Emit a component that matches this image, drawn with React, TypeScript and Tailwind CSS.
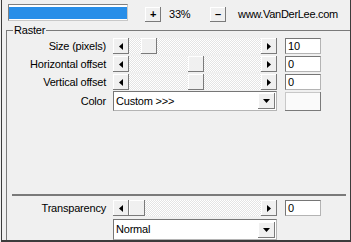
import React from 'react';

const raised =
  'bg-[#f0f0f0] shadow-[inset_-1px_-1px_0_#7a7a7a,inset_1px_1px_0_#ffffff]';
const sunken = 'bg-white border border-[#b4b4b4] border-t-[#767676] border-l-[#767676]';

const ArrowLeft = () => (
  <svg width="4" height="7" viewBox="0 0 4 7">
    <polygon points="4,0 4,7 0,3.5" fill="#000" />
  </svg>
);

const ArrowRight = () => (
  <svg width="4" height="7" viewBox="0 0 4 7">
    <polygon points="0,0 0,7 4,3.5" fill="#000" />
  </svg>
);

const ArrowDown = () => (
  <svg width="7" height="4" viewBox="0 0 7 4">
    <polygon points="0,0 7,0 3.5,4" fill="#000" />
  </svg>
);

const Scroll: React.FC<{ thumb: string }> = ({ thumb }) => (
  <div className="flex w-[164px] h-[16px]">
    <div className={`${raised} w-[16px] h-full flex items-center justify-center`}>
      <ArrowLeft />
    </div>
    <div className="flex-1 h-full bg-[repeating-conic-gradient(#ffffff_0_25%,#e4e4e4_0_50%)] bg-[length:2px_2px]">
      <div className={`${raised} ${thumb} w-[16px] h-full`} />
    </div>
    <div className={`${raised} w-[16px] h-full flex items-center justify-center`}>
      <ArrowRight />
    </div>
  </div>
);

const Edit: React.FC<{ value: string }> = ({ value }) => (
  <div className={`${sunken} w-[36px] h-[16px] ml-[8px] pl-[2px] leading-[14px]`}>{value}</div>
);

const Combo: React.FC<{ value: string }> = ({ value }) => (
  <div className={`${sunken} w-[164px] h-full flex items-center pl-[2px] pr-px`}>
    <span className="flex-1">{value}</span>
    <div className={`${raised} w-[17px] h-[16px] flex items-center justify-center`}>
      <ArrowDown />
    </div>
  </div>
);

const Row: React.FC<{ label: string; children: React.ReactNode; h?: string }> = ({
  label,
  children,
  h = 'h-[16px]',
}) => (
  <div className={`flex items-center ${h}`}>
    <div className="w-[99px] text-right">{label}</div>
    <div className="ml-[7px] flex items-center h-full">{children}</div>
  </div>
);

export default function App() {
  return (
    <div className="w-[351px] h-[242px] bg-[#f0f0f0] overflow-hidden text-black text-[11px] tracking-[-0.2px] font-['Liberation_Sans',Arial,sans-serif]">
      <div className="h-full ml-px border-l border-r border-b-2 border-[#3c3c3c] flex flex-col">
        {/* top bar */}
        <div className="flex items-start h-[23px] pt-[4px] pl-[6px]">
          <div className="w-[120px] h-[17px] bg-white border border-[#c8c8c8] border-t-[#808080] border-l-[#808080] pt-[2px] pb-px">
            <div className="h-full bg-[#288ee8]" />
          </div>
          <div className={`${raised} ml-[17px] mt-[3px] w-[16px] h-[15px] flex items-center justify-center font-bold leading-none`}>
            +
          </div>
          <div className="ml-[8px] mt-[3px] w-[41px] leading-[15px]">33%</div>
          <div className={`${raised} mt-[3px] w-[16px] h-[15px] flex items-center justify-center font-bold leading-none`}>
            –
          </div>
          <div className="ml-[12px] mt-[3px] leading-[15px] tracking-[-0.3px]">www.VanDerLee.com</div>
        </div>

        {/* group */}
        <div className="relative flex-1 mt-[7px] ml-[4px] border-t border-l border-[#7a7a7a] flex flex-col">
          <div className="absolute -top-[7px] left-[6px] px-px bg-[#f0f0f0] leading-[13px]">Raster</div>
          <div className="pt-[7px] flex flex-col gap-[2px]">
            <Row label="Size (pixels)">
              <Scroll thumb="ml-[12px]" />
              <Edit value="10" />
            </Row>
            <Row label="Horizontal offset">
              <Scroll thumb="ml-[59px]" />
              <Edit value="0" />
            </Row>
            <Row label="Vertical offset">
              <Scroll thumb="ml-[59px]" />
              <Edit value="0" />
            </Row>
          </div>
          <div className="mt-px">
            <Row label="Color" h="h-[20px]">
              <Combo value="Custom >>>" />
              <div className="ml-[8px] w-[36px] h-[19px] bg-[#fafafa] shadow-[inset_-1px_-1px_0_#7a7a7a,inset_1px_1px_0_#c8c8c8]" />
            </Row>
          </div>
          <div className="mt-[83px] ml-[5px] mr-[4px] h-[2px] bg-[#7a7a7a]" />
          <div className="mt-[4px]">
            <Row label="Transparency">
              <Scroll thumb="ml-0" />
              <Edit value="0" />
            </Row>
          </div>
          <div className="mt-[3px]">
            <Row label="" h="h-[21px]">
              <Combo value="Normal" />
            </Row>
          </div>
        </div>
      </div>
    </div>
  );
}
